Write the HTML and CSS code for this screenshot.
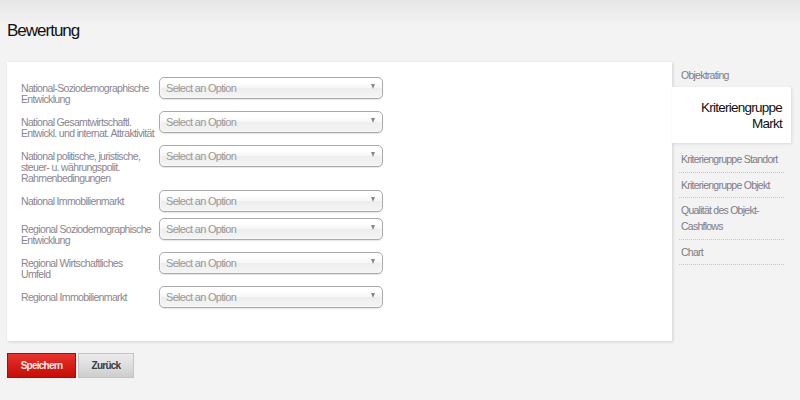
FILE: index.html
```html
<!DOCTYPE html>
<html lang="de">
<head>
<meta charset="utf-8">
<title>Bewertung</title>
<link rel="stylesheet" href="styles.css">
</head>
<body>
<div class="page">
  <h1 class="title">Bewertung</h1>
  <div class="layout">
    <div class="main">
      <form class="panel">
        <div class="row">
          <label class="label">National-Soziodemographische<br>Entwicklung</label>
          <div class="select"><span class="placeholder">Select an Option</span><span class="arrow"></span></div>
        </div>
        <div class="row">
          <label class="label">National Gesamtwirtschaftl.<br>Entwickl. und internat. Attraktivität</label>
          <div class="select"><span class="placeholder">Select an Option</span><span class="arrow"></span></div>
        </div>
        <div class="row">
          <label class="label">National politische, juristische,<br>steuer- u. währungspolit.<br>Rahmenbedingungen</label>
          <div class="select"><span class="placeholder">Select an Option</span><span class="arrow"></span></div>
        </div>
        <div class="row">
          <label class="label">National Immobilienmarkt</label>
          <div class="select"><span class="placeholder">Select an Option</span><span class="arrow"></span></div>
        </div>
        <div class="row">
          <label class="label">Regional Soziodemographische<br>Entwicklung</label>
          <div class="select"><span class="placeholder">Select an Option</span><span class="arrow"></span></div>
        </div>
        <div class="row">
          <label class="label">Regional Wirtschaftliches<br>Umfeld</label>
          <div class="select"><span class="placeholder">Select an Option</span><span class="arrow"></span></div>
        </div>
        <div class="row">
          <label class="label">Regional Immobilienmarkt</label>
          <div class="select"><span class="placeholder">Select an Option</span><span class="arrow"></span></div>
        </div>
      </form>
      <div class="actions">
        <button class="btn btn-primary" type="button">Speichern</button>
        <button class="btn btn-secondary" type="button">Zurück</button>
      </div>
    </div>
    <nav class="sidebar">
      <a class="nav-item first">Objektrating</a>
      <a class="nav-item active">Kriteriengruppe Markt</a>
      <a class="nav-item after-active">Kriteriengruppe Standort</a>
      <a class="nav-item">Kriteriengruppe Objekt</a>
      <a class="nav-item">Qualität des Objekt-Cashflows</a>
      <a class="nav-item">Chart</a>
    </nav>
  </div>
</div>
</body>
</html>
```

FILE: styles.css
```css
html, body {
  margin: 0;
  padding: 0;
}

body {
  background: linear-gradient(to bottom, #e6e6e6 0px, #f3f3f3 26px, #f3f3f3 100%);
  background-color: #f3f3f3;
  min-height: 400px;
  font-family: "Liberation Sans", Arial, sans-serif;
  color: #888;
}

.page {
  padding: 0 9px 0 7px;
}

.title {
  margin: 0;
  padding-top: 20px;
  font-size: 17px;
  letter-spacing: -1px;
  line-height: 22px;
  font-weight: normal;
  color: #111;
  margin-bottom: 20px;
}

.layout {
  display: flex;
  align-items: flex-start;
}

.main {
  width: 665px;
  flex: none;
}

.panel {
  background: #fff;
  box-shadow: 1px 1px 3px rgba(0, 0, 0, 0.14);
  padding: 15px 14px 33px 14px;
  display: flex;
  flex-direction: column;
  gap: 6px;
}

.row {
  display: flex;
  align-items: flex-start;
}

.label {
  width: 136px;
  flex: none;
  padding-right: 2px;
  padding-top: 6px;
  font-size: 10.5px;
  letter-spacing: -0.65px;
  line-height: 11px;
  white-space: nowrap;
  color: #8a8590;
}

.select {
  width: 224px;
  height: 22px;
  box-sizing: border-box;
  border: 1px solid #aaa;
  border-radius: 5px;
  background: linear-gradient(to bottom, #ffffff 20%, #f6f6f6 50%, #eeeeee 52%, #f4f4f4 100%);
  box-shadow: inset 0 0 3px #fff, 0 1px 1px rgba(0, 0, 0, 0.1);
  display: flex;
  align-items: center;
  justify-content: space-between;
  padding: 0 7px 0 6px;
}

.placeholder {
  font-size: 11px;
  letter-spacing: -0.7px;
  line-height: 20px;
  color: #999;
}

.arrow {
  width: 0;
  height: 0;
  border-left: 2.5px solid transparent;
  border-right: 2.5px solid transparent;
  border-top: 5px solid #888;
  margin-top: -3px;
}

.actions {
  display: flex;
  gap: 2px;
  margin-top: 12px;
}

.btn {
  height: 25px;
  box-sizing: border-box;
  font-family: "Liberation Sans", Arial, sans-serif;
  font-size: 10px;
  letter-spacing: -0.75px;
  font-weight: bold;
  padding: 0;
  cursor: pointer;
  border-radius: 0;
}

.btn-primary {
  width: 69px;
  color: #fbe8ea;
  background: linear-gradient(to bottom, #e8352d 0%, #d41d17 55%, #c40f0a 100%);
  border: 1px solid #a50e0a;
}

.btn-secondary {
  width: 56px;
  color: #3a3a44;
  background: linear-gradient(to bottom, #ececec 0%, #dcdcdc 55%, #cdcdcd 100%);
  border: 1px solid #c4c4c4;
}

.sidebar {
  width: 119px;
  flex: none;
  display: flex;
  flex-direction: column;
  padding-top: 1px;
}

.nav-item {
  display: block;
  margin: 0 7px;
  padding: 4px 0 4.5px 2px;
  font-size: 10.5px;
  letter-spacing: -0.75px;
  line-height: 16px;
  color: #7f7a86;
  border-bottom: 1px dotted #c8c8c8;
}

.nav-item.first {
  border-bottom: none;
  padding-bottom: 4px;
}

.nav-item.active {
  margin: 0;
  padding: 13px 9px 11px 0;
  background: #fff;
  box-shadow: 1px 1px 3px rgba(0, 0, 0, 0.1);
  text-align: right;
  font-size: 13.5px;
  letter-spacing: -0.75px;
  line-height: 16px;
  color: #111;
  border-bottom: none;
}

.nav-item.after-active {
  margin-top: 4px;
}
```
